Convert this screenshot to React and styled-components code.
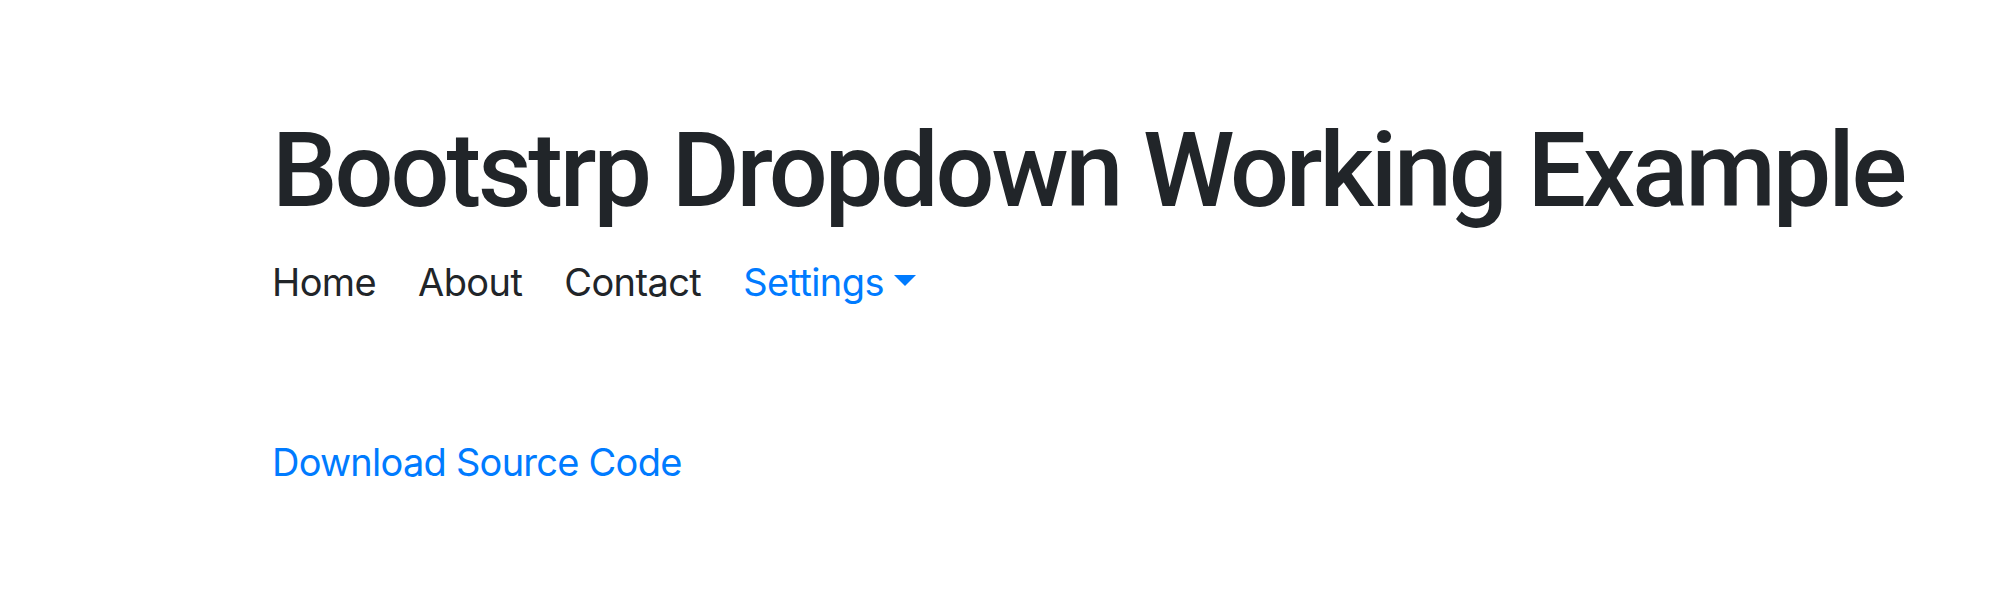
import React from "react";
import styled, { createGlobalStyle } from "styled-components";

const Global = createGlobalStyle`
  html, body { margin: 0; padding: 0; background: #fff; }
  body {
    font-family: Inter, "Liberation Sans", sans-serif;
    color: #212529;
  }
`;

const Container = styled.div`
  padding: 109px 0 0 272px;
`;

const Title = styled.h1`
  margin: 0;
  font-family: Roboto, "Liberation Sans", sans-serif;
  font-size: 104px;
  font-weight: 500;
  line-height: 1.2;
  letter-spacing: -3.1px;
  white-space: nowrap;
  color: #212529;
`;

const Nav = styled.nav`
  display: flex;
  align-items: baseline;
  gap: 42px;
  margin-top: 20px;
  font-size: 38px;
  line-height: 1.5;
  letter-spacing: -0.6px;
`;

const NavLink = styled.a`
  color: ${(p) => (p.$active ? "#007bff" : "#212529")};
  text-decoration: none;
  display: inline-flex;
  align-items: center;
`;

const Caret = styled.span`
  display: inline-block;
  margin-left: 10px;
  width: 0;
  height: 0;
  border-left: 11px solid transparent;
  border-right: 11px solid transparent;
  border-top: 11px solid #007bff;
  position: relative;
  top: -2px;
`;

const Download = styled.a`
  display: block;
  margin-top: 123px;
  font-size: 38px;
  line-height: 1.5;
  letter-spacing: -0.75px;
  color: #007bff;
  text-decoration: none;
`;

export default function App() {
  return (
    <>
      <Global />
      <Container>
        <Title>Bootstrp Dropdown Working Example</Title>
        <Nav>
          <NavLink href="#">Home</NavLink>
          <NavLink href="#">About</NavLink>
          <NavLink href="#">Contact</NavLink>
          <NavLink href="#" $active>
            Settings
            <Caret />
          </NavLink>
        </Nav>
        <Download href="#">Download Source Code</Download>
      </Container>
    </>
  );
}
